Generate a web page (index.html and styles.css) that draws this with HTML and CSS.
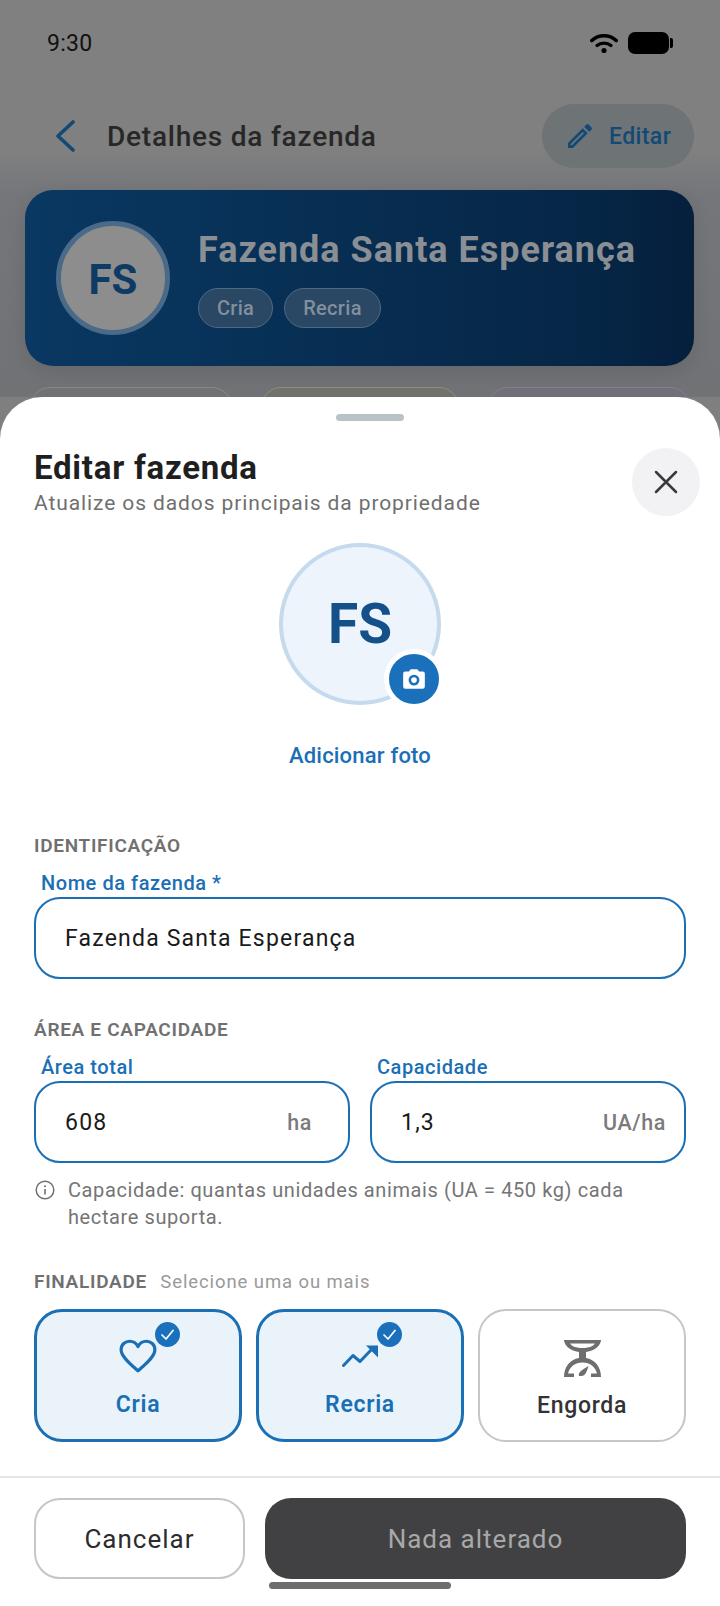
FILE: index.html
```html
<!DOCTYPE html>
<html lang="pt-BR">

<head>
    <meta charset="UTF-8">
    <meta name="viewport" content="width=device-width, initial-scale=1.0">
    <title>Editar fazenda</title>
    <link rel="stylesheet" href="styles.css">
</head>

<body>
    <div class="screen">
        <!-- pagina atras do modal, ja escurecida -->
        <div class="status">
            <span class="clock">9:30</span>
            <div class="status-icons">
                <svg class="wifi" viewBox="0 0 28 20">
                    <path d="M1.8 7.5C8.5 1.2 19.5 1.2 26.2 7.5" fill="none" stroke="#000" stroke-width="3.6" stroke-linecap="round"/>
                    <path d="M7 12.5C11 9.2 17 9.2 21 12.5" fill="none" stroke="#000" stroke-width="3.2" stroke-linecap="round"/>
                    <circle cx="14" cy="17.5" r="2.6" fill="#000"/>
                </svg>
                <div class="battery"></div>
                <div class="battery-tip"></div>
            </div>
        </div>

        <div class="topbar">
            <svg class="back" viewBox="0 0 20 32">
                <path d="M18 2L3 16L18 30" fill="none" stroke="#124a75" stroke-width="3.6" stroke-linecap="round" stroke-linejoin="round"/>
            </svg>
            <span class="page-title">Detalhes da fazenda</span>
            <div class="edit-btn">
                <svg class="pencil" viewBox="3 3 18 18">
                    <path d="M3 17.25V21h3.75L17.81 9.94l-3.75-3.75L3 17.25zM5.92 19H5v-.92l9.06-9.06.92.92L5.92 19zM20.71 5.63l-2.34-2.34c-.2-.2-.45-.29-.71-.29s-.51.1-.7.29l-1.83 1.83 3.75 3.75 1.83-1.83c.39-.39.39-1.02 0-1.41z" fill="#124a75"/>
                </svg>
                <span>Editar</span>
            </div>
        </div>

        <div class="hero">
            <div class="hero-avatar">FS</div>
            <div class="hero-info">
                <div class="hero-name">Fazenda Santa Esperança</div>
                <div class="hero-tags">
                    <span class="tag">Cria</span>
                    <span class="tag">Recria</span>
                </div>
            </div>
        </div>

        <div class="stats">
            <div class="stat"></div>
            <div class="stat stat-yellow"></div>
            <div class="stat stat-purple"></div>
        </div>

        <!-- modal -->
        <div class="sheet">
            <div class="handle"></div>

            <div class="sheet-head">
                <div>
                    <div class="sheet-title">Editar fazenda</div>
                    <div class="sheet-sub">Atualize os dados principais da propriedade</div>
                </div>
                <div class="close">
                    <svg viewBox="0 0 24 24">
                        <path d="M2 2L22 22M22 2L2 22" fill="none" stroke="#3a3a3c" stroke-width="2.5" stroke-linecap="round"/>
                    </svg>
                </div>
            </div>

            <div class="photo">
                <div class="photo-circle">
                    FS
                    <div class="photo-badge">
                        <svg viewBox="0 0 24 24">
                            <path fill-rule="evenodd" d="M9 3L7.2 5H4a2 2 0 0 0-2 2v12a2 2 0 0 0 2 2h16a2 2 0 0 0 2-2V7a2 2 0 0 0-2-2h-3.2L15 3H9zM12 8a5 5 0 1 1 0 10a5 5 0 0 1 0-10zM12 10.4a2.6 2.6 0 1 0 0 5.2a2.6 2.6 0 0 0 0-5.2z" fill="#fff"/>
                        </svg>
                    </div>
                </div>
                <div class="photo-link">Adicionar foto</div>
            </div>

            <div class="form">
                <div class="section-title first">IDENTIFICAÇÃO</div>
                <div class="field-label">Nome da fazenda *</div>
                <div class="input">Fazenda Santa Esperança</div>

                <div class="section-title">ÁREA E CAPACIDADE</div>
                <div class="fields">
                    <div>
                        <div class="field-label">Área total</div>
                        <div class="input">608<span class="unit">ha</span></div>
                    </div>
                    <div>
                        <div class="field-label">Capacidade</div>
                        <div class="input">1,3<span class="unit unit-wide">UA/ha</span></div>
                    </div>
                </div>
                <div class="hint">
                    <svg class="info" viewBox="0 0 20 20">
                        <circle cx="10" cy="10" r="8.8" fill="none" stroke="#6f6f6f" stroke-width="1.5"/>
                        <path d="M10 9V14.5" stroke="#6f6f6f" stroke-width="1.6"/>
                        <circle cx="10" cy="6.2" r="1" fill="#6f6f6f"/>
                    </svg>
                    <p>Capacidade: quantas unidades animais (UA = 450 kg) cada hectare suporta.</p>
                </div>

                <div class="section-title purpose">FINALIDADE <span>Selecione uma ou mais</span></div>
                <div class="cards">
                    <div class="card selected">
                        <div class="check">
                            <svg viewBox="0 0 25 25"><path d="M7 13L11 17L18 8.5" fill="none" stroke="#fff" stroke-width="1.7" stroke-linecap="round" stroke-linejoin="round"/></svg>
                        </div>
                        <div class="card-icon">
                            <svg class="heart" viewBox="0 0 36 32">
                                <path d="M18 30C12 24.5 2 17 2 10C2 5 6 2 10 2C13.5 2 16.5 4 18 7C19.5 4 22.5 2 26 2C30 2 34 5 34 10C34 17 24 24.5 18 30Z" fill="none" stroke="#1a6fb5" stroke-width="3" stroke-linejoin="round"/>
                            </svg>
                        </div>
                        <div class="card-label">Cria</div>
                    </div>
                    <div class="card selected">
                        <div class="check">
                            <svg viewBox="0 0 25 25"><path d="M7 13L11 17L18 8.5" fill="none" stroke="#fff" stroke-width="1.7" stroke-linecap="round" stroke-linejoin="round"/></svg>
                        </div>
                        <div class="card-icon">
                            <svg class="trend" viewBox="0 0 37 22">
                                <path d="M1.5 20.5L11 10.5L18 16.5L30 4" fill="none" stroke="#1a6fb5" stroke-width="3" stroke-linecap="round" stroke-linejoin="round"/>
                                <path d="M24 0.5H36V12.5Z" fill="#1a6fb5"/>
                            </svg>
                        </div>
                        <div class="card-label">Recria</div>
                    </div>
                    <div class="card">
                        <div class="card-icon">
                            <svg class="scale" viewBox="0 0 37 37">
                                <path fill-rule="evenodd" d="M0 0H37V0.5C36 6 32 10 22 12V18C31 19.5 37 27 37 37H27V33.5H33C31.5 27 26 22.5 18.5 22.5C11 22.5 5.5 27 4 33.5H10V37H0C0 27 6 19.5 15 18V12C5 10 1 6 0 0.5ZM6 3.5C8 6.5 12.5 8 18.5 8C24.5 8 29 6.5 31 3.5Z" fill="#6e6e6e"/>
                                <path d="M15 36C14 33 16 31 24.5 26C22.5 33 20.5 36 17.5 36Z" fill="#6e6e6e"/>
                            </svg>
                        </div>
                        <div class="card-label">Engorda</div>
                    </div>
                </div>
            </div>

            <div class="divider"></div>

            <div class="actions">
                <div class="btn btn-cancel">Cancelar</div>
                <div class="btn btn-save">Nada alterado</div>
            </div>
            <div class="home-bar"></div>
        </div>
    </div>
</body>

</html>
```

FILE: styles.css
```css
* {
    box-sizing: border-box;
}

html,
body {
    margin: 0;
    padding: 0;
}

body {
    font-family: Roboto, "Noto Sans", sans-serif;
    background-color: #7f7f7f;
}

.screen {
    position: relative;
    width: 720px;
    height: 1606px;
    overflow: hidden;
    background: linear-gradient(#808080 0, #808080 150px, #74767a 195px, #707276 397px);
    background-size: 100% 397px;
    background-repeat: no-repeat;
}

/* status bar */
.status {
    display: flex;
    justify-content: space-between;
    align-items: center;
    height: 86px;
    padding: 0 47px 0 47px;
}

.clock {
    font-size: 23px;
    letter-spacing: 0.3px;
    color: #111;
}

.status-icons {
    display: flex;
    align-items: center;
}

.wifi {
    width: 28px;
    height: 20px;
    margin-right: 10px;
}

.battery {
    width: 41px;
    height: 22px;
    background-color: #000;
    border-radius: 7px;
}

.battery-tip {
    width: 3px;
    height: 10px;
    margin-left: 1px;
    background-color: #000;
    border-radius: 0 2px 2px 0;
}

/* cabecalho */
.topbar {
    display: flex;
    align-items: center;
    height: 64px;
    margin-top: 18px;
    padding: 0 26px 0 55px;
}

.back {
    width: 20px;
    height: 32px;
    margin-right: 32px;
}

.page-title {
    flex: 1;
    font-size: 28px;
    font-weight: 500;
    letter-spacing: 0.78px;
    color: #272727;
}

.edit-btn {
    display: flex;
    align-items: center;
    width: 152px;
    height: 64px;
    padding-left: 26px;
    background-color: #6e7376;
    border-radius: 32px;
    font-size: 23px;
    font-weight: 500;
    letter-spacing: 0.4px;
    color: #124a75;
}

.pencil {
    width: 24px;
    height: 24px;
    margin-right: 17px;
}

/* card da fazenda */
.hero {
    display: flex;
    align-items: center;
    width: 669px;
    height: 176px;
    margin: 22px 0 0 25px;
    padding-left: 31px;
    background: linear-gradient(90deg, #093862, #062646 85%, #051f3c);
    border-radius: 28px;
    box-shadow: 0 6px 20px rgba(0, 0, 0, 0.1);
}

.hero-avatar {
    display: flex;
    align-items: center;
    justify-content: center;
    width: 114px;
    height: 114px;
    padding-top: 2px;
    background-color: #8d8d8d;
    border: 5px solid #4a6a88;
    border-radius: 50%;
    font-size: 42px;
    font-weight: 700;
    color: #0e3a66;
}

.hero-info {
    margin-left: 28px;
}

.hero-name {
    font-size: 36px;
    font-weight: 700;
    line-height: 44px;
    letter-spacing: 1px;
    color: #8b8f94;
}

.hero-tags {
    display: flex;
    gap: 11px;
    margin-top: 16px;
}

.tag {
    display: flex;
    align-items: center;
    height: 40px;
    padding: 0 18px;
    background-color: #2a4764;
    border: 1px solid #4d6a85;
    border-radius: 20px;
    font-size: 20px;
    font-weight: 500;
    letter-spacing: 0.3px;
    color: #82909d;
}

.stats {
    display: flex;
    margin: 21px 0 0 30px;
}

.stat {
    width: 202px;
    height: 40px;
    border: 1px solid #888a86;
    border-radius: 24px;
    background-color: #707276;
    margin-right: 29px;
}

.stat-yellow {
    width: 198px;
    border-color: #8f8f78;
    background-color: #72726c;
}

.stat-purple {
    margin-right: 0;
    border-color: #84808e;
    background-color: #71707a;
}

/* modal */
.sheet {
    position: absolute;
    left: 0;
    right: 0;
    top: 397px;
    bottom: 0;
    background-color: #fff;
    border-radius: 42px 42px 0 0;
}

.handle {
    width: 68px;
    height: 7px;
    margin: 17px 0 0 336px;
    background-color: #b9c3c7;
    border-radius: 4px;
}

.sheet-head {
    display: flex;
    justify-content: space-between;
    margin-top: 27px;
    padding: 0 20px 0 34px;
}

.sheet-title {
    font-size: 33px;
    font-weight: 700;
    line-height: 40px;
    letter-spacing: 0.75px;
    color: #1f1f1f;
}

.sheet-sub {
    margin-top: 1px;
    font-size: 21px;
    line-height: 28px;
    letter-spacing: 0.9px;
    color: #6f6f6f;
}

.close {
    display: flex;
    align-items: center;
    justify-content: center;
    width: 68px;
    height: 68px;
    background-color: #f2f2f5;
    border-radius: 50%;
}

.close svg {
    width: 24px;
    height: 24px;
}

.photo {
    display: flex;
    flex-direction: column;
    align-items: center;
    margin-top: 26px;
}

.photo-circle {
    position: relative;
    display: flex;
    align-items: center;
    justify-content: center;
    width: 162px;
    height: 162px;
    background-color: #edf4fb;
    border: 4px solid #c5daec;
    border-radius: 50%;
    font-size: 55px;
    font-weight: 700;
    color: #145089;
}

.photo-badge {
    position: absolute;
    left: 101px;
    top: 102px;
    display: flex;
    align-items: center;
    justify-content: center;
    width: 60px;
    height: 60px;
    background-color: #1b70bb;
    border: 5px solid #fff;
    border-radius: 50%;
}

.photo-badge svg {
    width: 26px;
    height: 26px;
}

.photo-link {
    margin-top: 36px;
    font-size: 22px;
    font-weight: 500;
    line-height: 30px;
    letter-spacing: 0.2px;
    color: #1a6fb5;
}

.form {
    padding: 0 34px;
}

.section-title {
    margin-top: 39px;
    font-size: 19px;
    font-weight: 600;
    line-height: 24px;
    letter-spacing: 0.7px;
    color: #707070;
}

.section-title.first {
    margin-top: 63px;
}

.section-title.purpose {
    margin-top: 39px;
}

.section-title span {
    margin-left: 8px;
    font-size: 18.5px;
    font-weight: 400;
    letter-spacing: 0.9px;
    color: #9a9a9a;
}

.field-label {
    margin: 13px 0 0 7px;
    font-size: 20px;
    font-weight: 500;
    line-height: 24px;
    letter-spacing: 0.55px;
    color: #1a6fb5;
}

.input {
    display: flex;
    align-items: center;
    justify-content: space-between;
    height: 82px;
    margin-top: 2px;
    padding: 0 36px 0 29px;
    background-color: #fff;
    border: 2px solid #1a6fb5;
    border-radius: 26px;
    font-size: 23px;
    letter-spacing: 1.2px;
    color: #1a1a1a;
}

.unit {
    font-size: 21.5px;
    font-weight: 500;
    letter-spacing: 0.6px;
    color: #7b7b7b;
}

.unit-wide {
    margin-right: -18px;
}

.fields {
    display: grid;
    grid-template-columns: 316px 316px;
    gap: 20px;
}

.hint {
    display: flex;
    margin-top: 14px;
}

.info {
    flex: none;
    width: 20px;
    height: 20px;
    margin: 3px 13px 0 1px;
}

.hint p {
    margin: 0;
    width: 590px;
    font-size: 20px;
    line-height: 27px;
    letter-spacing: 0.6px;
    color: #757575;
}

.cards {
    display: grid;
    grid-template-columns: repeat(3, 208px);
    gap: 14px;
    margin-top: 15px;
}

.card {
    position: relative;
    display: flex;
    flex-direction: column;
    align-items: center;
    height: 133px;
    padding-top: 27px;
    background-color: #fff;
    border: 2px solid #c6c6c6;
    border-radius: 28px;
}

.card.selected {
    padding-top: 25px;
    background-color: #ebf3fa;
    border: 3px solid #1a6fb5;
}

.check {
    position: absolute;
    left: 118px;
    top: 10px;
    width: 25px;
    height: 25px;
    background-color: #1b70bb;
    border-radius: 50%;
}

.check svg {
    display: block;
    width: 25px;
    height: 25px;
}

.card-icon {
    display: flex;
    align-items: center;
    justify-content: center;
    height: 40px;
}

.heart {
    width: 38px;
    height: 34px;
    margin-top: -2px;
}

.trend {
    width: 37px;
    height: 22px;
    margin: -2px 0 0 0;
}

.scale {
    width: 37px;
    height: 37px;
}

.card-label {
    margin-top: 13px;
    font-size: 23px;
    font-weight: 500;
    line-height: 30px;
    letter-spacing: 0.7px;
    color: #333;
}

.selected .card-label {
    font-weight: 600;
    color: #1a6fb5;
}

.divider {
    height: 2px;
    margin-top: 34px;
    background-color: #e6e6e6;
}

.actions {
    display: flex;
    gap: 20px;
    margin-top: 20px;
    padding: 0 34px;
}

.btn {
    display: flex;
    align-items: center;
    justify-content: center;
    height: 81px;
    border-radius: 26px;
    font-size: 26px;
    letter-spacing: 1px;
}

.btn-cancel {
    width: 211px;
    background-color: #fff;
    border: 2px solid #c6c6c6;
    color: #2c2c2e;
}

.btn-save {
    flex: 1;
    background-color: #414143;
    color: #a8a8a8;
}

.home-bar {
    width: 182px;
    height: 7px;
    margin: 3px auto 0;
    background-color: #6e6e6e;
    border-radius: 4px;
}
```
